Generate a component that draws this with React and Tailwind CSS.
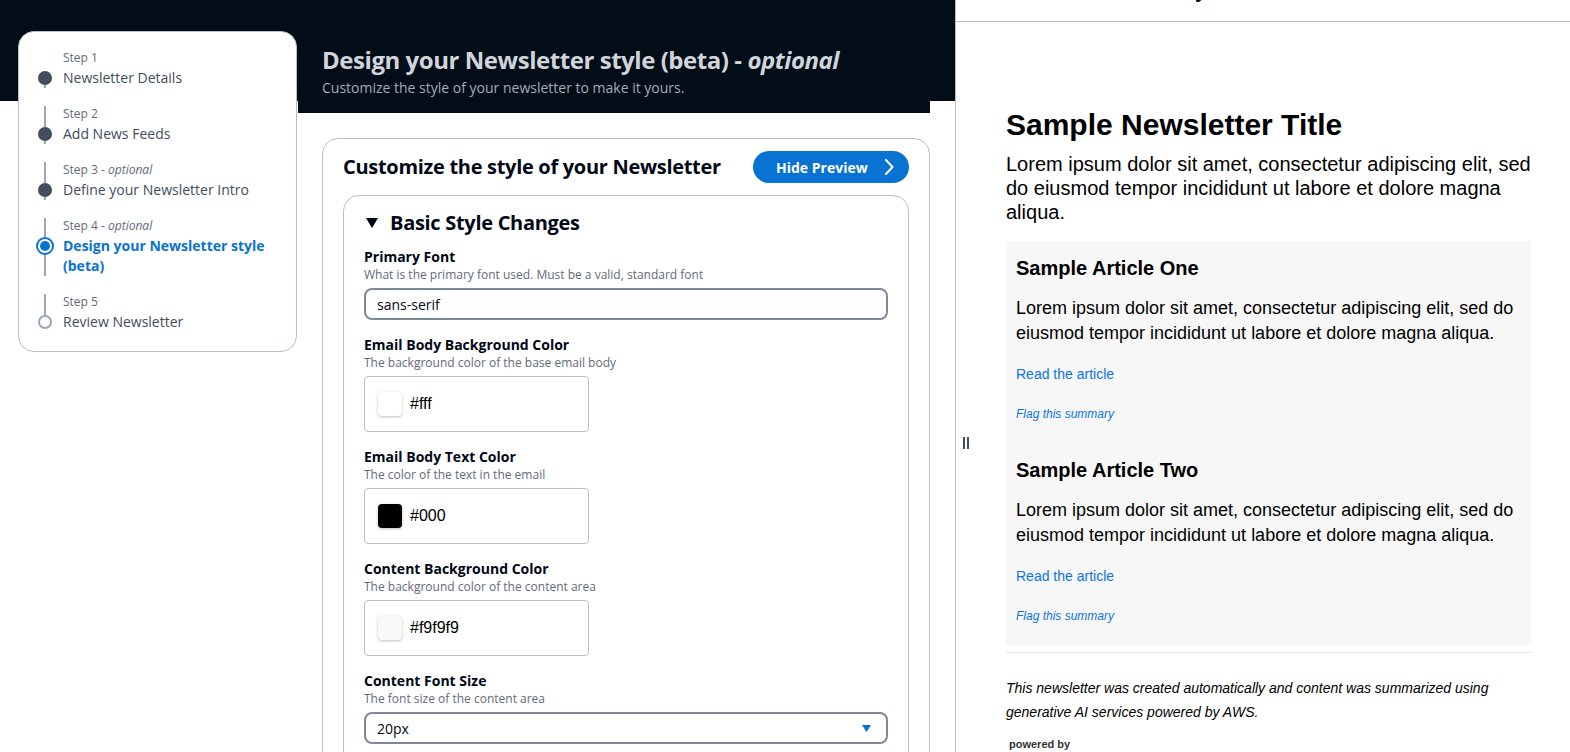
import React from "react";

const steps = [
  { n: "Step 1", label: "Newsletter Details", state: "done" },
  { n: "Step 2", label: "Add News Feeds", state: "done" },
  { n: "Step 3", opt: true, label: "Define your Newsletter Intro", state: "done" },
  { n: "Step 4", opt: true, label: "Design your Newsletter style (beta)", state: "active" },
  { n: "Step 5", label: "Review Newsletter", state: "todo" },
];

function StepCircle({ state }) {
  if (state === "active")
    return (
      <div className="flex h-[18px] w-[18px] shrink-0 items-center justify-center rounded-full border-2 border-[#0972d3] bg-white">
        <div className="h-[10px] w-[10px] rounded-full bg-[#0972d3]" />
      </div>
    );
  if (state === "todo")
    return <div className="h-[14px] w-[14px] shrink-0 rounded-full border-2 border-[#9ba7b6] bg-white" />;
  return <div className="h-[14px] w-[14px] shrink-0 rounded-full bg-[#414d5c]" />;
}

function StepsCard() {
  return (
    <div className="w-[279px] rounded-[16px] border border-[#b6bec9] bg-white pb-[19px] pl-[14px] pr-[8px] pt-[18px]">
      {steps.map((s, i) => {
        const first = i === 0;
        const last = i === steps.length - 1;
        return (
          <div key={s.n} className={`flex ${last ? "" : "pb-[18px]"}`}>
            <div className="flex w-[24px] shrink-0 flex-col items-center">
              <div
                className={`w-[2px] ${s.state === "active" ? "h-[19px]" : "h-[21px]"} ${first ? "bg-transparent" : "bg-[#9ba7b6]"}`}
              />
              <StepCircle state={s.state} />
              <div className={`w-[2px] flex-1 ${last ? "bg-transparent" : "bg-[#9ba7b6]"}`} />
            </div>
            <div className="ml-[6px] min-w-0 flex-1">
              <div className="text-[12px] leading-[16px] text-[#5f6b7a]">
                {s.n}
                {s.opt && (
                  <>
                    {" - "}
                    <i>optional</i>
                  </>
                )}
              </div>
              <div
                className={`mt-[2px] text-[14px] leading-[20px] ${
                  s.state === "active" ? "font-bold text-[#0972d3]" : "text-[#414d5c]"
                }`}
              >
                {s.label}
              </div>
            </div>
          </div>
        );
      })}
    </div>
  );
}

function FieldLabel({ label, desc }) {
  return (
    <>
      <div className="text-[14px] font-bold leading-[20px] text-[#000716]">{label}</div>
      <div className="text-[12px] leading-[16px] text-[#5f6b7a]">{desc}</div>
    </>
  );
}

function ColorField({ label, desc, color, value, mb = true }) {
  return (
    <div className={mb ? "mb-[15px]" : ""}>
      <FieldLabel label={label} desc={desc} />
      <div className="mt-[5px] flex h-[56px] w-[225px] items-center rounded-[4px] border border-[#b6bec9] bg-white pl-[13px]">
        <div
          className="h-[24px] w-[24px] rounded-[4px] shadow-[0_1px_3px_rgba(0,0,0,0.25)]"
          style={{ backgroundColor: color }}
        />
        <span className="ml-[8px] font-['Liberation_Sans',Arial,sans-serif] text-[16px] text-black">{value}</span>
      </div>
    </div>
  );
}

export default function App() {
  return (
    <div className="flex h-[752px] w-[1570px] overflow-hidden bg-white font-['Open_Sans',sans-serif] text-[#000716]">
      {/* Left/main area */}
      <div className="flex w-[955px] shrink-0 bg-[linear-gradient(to_bottom,#020d18_0px,#020d18_101px,#ffffff_101px)]">
        <div className="w-[298px] shrink-0 pl-[18px] pt-[31px]">
          <StepsCard />
        </div>
        <div className="w-[632px] shrink-0">
          <div className="bg-[#020d18] pb-[15px] pl-[24px] pt-[44px]">
            <h1 className="text-[24px] font-bold leading-[32px] tracking-[-0.45px] text-[#d1d5db]">
              Design your Newsletter style (beta) - <i>optional</i>
            </h1>
            <p className="mt-[2px] text-[14px] leading-[20px] text-[#a4abb5]">
              Customize the style of your newsletter to make it yours.
            </p>
          </div>
          <div className="pl-[24px] pt-[25px]">
            <div className="rounded-[16px] border border-[#b6bec9] bg-white px-[20px] pb-[20px] pt-[12px]">
              <div className="flex h-[32px] items-center justify-between">
                <h2 className="text-[20px] font-bold leading-[24px] tracking-[-0.3px] text-[#000716]">
                  Customize the style of your Newsletter
                </h2>
                <button className="flex h-[32px] w-[156px] items-center rounded-full bg-[#0972d3] pl-[23px] text-[14px] font-bold text-white">
                  <span>Hide Preview</span>
                  <svg className="ml-[16px]" width="10" height="16" viewBox="0 0 10 16" fill="none">
                    <path d="M2 1 L8.5 8 L2 15" stroke="white" strokeWidth="2" strokeLinecap="round" strokeLinejoin="round" />
                  </svg>
                </button>
              </div>
              <div className="mt-[12px] rounded-[16px] border border-[#b6bec9] px-[20px] pb-[20px] pt-[15px]">
                <div className="flex h-[24px] items-center">
                  <svg className="ml-[2px]" width="12" height="10" viewBox="0 0 12 10">
                    <polygon points="0,0 12,0 6,10" fill="#000716" />
                  </svg>
                  <span className="ml-[12px] text-[20px] font-bold leading-[24px] tracking-[-0.3px]">
                    Basic Style Changes
                  </span>
                </div>
                <div className="mt-[12px]">
                  <div className="mb-[15px]">
                    <FieldLabel
                      label="Primary Font"
                      desc="What is the primary font used. Must be a valid, standard font"
                    />
                    <div className="mt-[5px] flex h-[32px] items-center rounded-[8px] border-2 border-[#7d8998] bg-white pl-[11px] text-[14px] text-[#000716]">
                      sans-serif
                    </div>
                  </div>
                  <ColorField
                    label="Email Body Background Color"
                    desc="The background color of the base email body"
                    color="#ffffff"
                    value="#fff"
                  />
                  <ColorField
                    label="Email Body Text Color"
                    desc="The color of the text in the email"
                    color="#000000"
                    value="#000"
                  />
                  <ColorField
                    label="Content Background Color"
                    desc="The background color of the content area"
                    color="#f9f9f9"
                    value="#f9f9f9"
                  />
                  <div className="mb-[15px]">
                    <FieldLabel label="Content Font Size" desc="The font size of the content area" />
                    <div className="mt-[5px] flex h-[32px] items-center justify-between rounded-[8px] border-2 border-[#7d8998] bg-white pl-[11px] pr-[15px] text-[14px] text-[#000716]">
                      <span>20px</span>
                      <svg width="9" height="7" viewBox="0 0 9 7">
                        <polygon points="0,0 9,0 4.5,7" fill="#0972d3" />
                      </svg>
                    </div>
                  </div>
                </div>
              </div>
            </div>
          </div>
        </div>
      </div>

      {/* Right preview panel */}
      <div className="flex min-w-0 flex-1 flex-col border-l border-[#b6bec9] bg-white">
        <div className="h-[22px] shrink-0 overflow-hidden border-b border-[#b6bec9]">
          <div className="-mt-[20px] pl-[117px] text-[18px] font-bold leading-[22px] text-[#000716]">
            Newsletter Style Preview
          </div>
        </div>
        <div className="flex flex-1">
          <div className="w-[50px] shrink-0 pl-[7px] pt-[415px]">
            <div className="flex h-[12px] gap-[2px]">
              <div className="h-[12px] w-[2px] bg-[#414d5c]" />
              <div className="h-[12px] w-[2px] bg-[#414d5c]" />
            </div>
          </div>
          <div className="w-[525px] shrink-0 pt-[85px] font-['Liberation_Sans',Arial,sans-serif] text-black">
            <h1 className="text-[30px] font-bold leading-[36px]">Sample Newsletter Title</h1>
            <p className="mt-[9px] text-[20px] leading-[24px]">
              Lorem ipsum dolor sit amet, consectetur adipiscing elit, sed do eiusmod tempor incididunt ut labore et
              dolore magna aliqua.
            </p>
            <div className="mt-[17px] bg-[#f7f7f7] px-[10px] pb-[22px] pt-[15px]">
              <h3 className="text-[20px] font-bold leading-[24px]">Sample Article One</h3>
              <p className="mt-[16px] text-[18px] leading-[25px]">
                Lorem ipsum dolor sit amet, consectetur adipiscing elit, sed do eiusmod tempor incididunt ut labore et
                dolore magna aliqua.
              </p>
              <div className="mt-[20px] text-[14px] leading-[16px] text-[#0a74e6]">Read the article</div>
              <div className="mt-[25px] text-[12px] italic leading-[14px] text-[#0a74e6]">Flag this summary</div>
              <h3 className="mt-[37px] text-[20px] font-bold leading-[24px]">Sample Article Two</h3>
              <p className="mt-[16px] text-[18px] leading-[25px]">
                Lorem ipsum dolor sit amet, consectetur adipiscing elit, sed do eiusmod tempor incididunt ut labore et
                dolore magna aliqua.
              </p>
              <div className="mt-[20px] text-[14px] leading-[16px] text-[#0a74e6]">Read the article</div>
              <div className="mt-[25px] text-[12px] italic leading-[14px] text-[#0a74e6]">Flag this summary</div>
            </div>
            <div className="mt-[7px] h-px bg-[#e5e5e5]" />
            <p className="mt-[23px] text-[14px] italic leading-[24px]">
              This newsletter was created automatically and content was summarized using generative AI services
              powered by AWS.
            </p>
            <div className="mt-[14px] pl-[3px] text-[11px] font-bold leading-[13px] text-[#333333]">powered by</div>
          </div>
        </div>
      </div>
    </div>
  );
}
